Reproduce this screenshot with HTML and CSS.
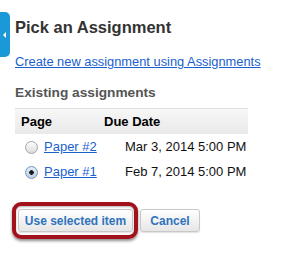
FILE: index.html
```html
<!DOCTYPE html>
<html>
<head>
<meta charset="utf-8">
<link rel="stylesheet" href="styles.css">
</head>
<body>
<div class="page">
  <div class="tab"><span class="tab-arrow"></span></div>
  <div class="content">
    <h1 class="title">Pick an Assignment</h1>
    <a class="create-link" href="#">Create new assignment using Assignments</a>
    <h2 class="subtitle">Existing assignments</h2>
    <div class="table">
      <div class="thead">
        <div class="th th-page">Page</div>
        <div class="th th-date">Due Date</div>
      </div>
      <div class="row">
        <div class="cell cell-page"><input class="radio" type="radio" name="a"><a class="item-link" href="#">Paper #2</a></div>
        <div class="cell cell-date">Mar 3, 2014 5:00 PM</div>
      </div>
      <div class="row">
        <div class="cell cell-page"><input class="radio" type="radio" name="a" checked><a class="item-link" href="#">Paper #1</a></div>
        <div class="cell cell-date">Feb 7, 2014 5:00 PM</div>
      </div>
    </div>
    <div class="actions">
      <button class="btn btn-highlight">Use selected item</button>
      <button class="btn btn-cancel">Cancel</button>
    </div>
  </div>
</div>
</body>
</html>
```
FILE: styles.css
```css
html, body {
  margin: 0;
  padding: 0;
  background: #fff;
}
body {
  font-family: "Liberation Sans", Arial, sans-serif;
  width: 298px;
  height: 253px;
  overflow: hidden;
}
.page {
  display: flex;
}
.tab {
  flex-shrink: 0;
  width: 10px;
  height: 45px;
  margin-top: 12px;
  background: #1a98d8;
  border-radius: 0 5px 5px 0;
  display: flex;
  align-items: center;
  justify-content: center;
}
.tab-arrow {
  width: 0;
  height: 0;
  border-top: 3px solid transparent;
  border-bottom: 3px solid transparent;
  border-right: 3px solid #fff;
  margin-right: 1px;
}
.content {
  padding-left: 5px;
  display: flex;
  flex-direction: column;
  align-items: flex-start;
}
.title {
  margin: 16px 0 0;
  font-size: 16.5px;
  line-height: 22px;
  font-weight: bold;
  color: #333;
}
.create-link {
  margin-top: 16px;
  font-size: 12.85px;
  line-height: 16px;
  color: #1a5fcf;
  text-decoration: underline;
}
.subtitle {
  margin: 14px 0 0;
  font-size: 13.7px;
  line-height: 17px;
  font-weight: bold;
  color: #555;
}
.table {
  margin-top: 7px;
  width: 233px;
  font-size: 13px;
  line-height: 16px;
}
.thead {
  display: grid;
  grid-template-columns: 89px 1fr;
  background: linear-gradient(#f7f7f7, #e9e9e9);
  border-top: 1px solid #dedede;
  padding: 5px 0 4px;
}
.th {
  font-weight: bold;
  color: #000;
}
.th-page {
  padding-left: 6px;
}
.row {
  display: grid;
  grid-template-columns: 110px 1fr;
  padding: 5px 0 4px;
  height: 16px;
}
.cell-page {
  display: flex;
  align-items: center;
  padding-left: 10px;
}
.cell-date {
  color: #111;
}
.radio {
  appearance: none;
  -webkit-appearance: none;
  margin: 0 6px 0 0;
  width: 13px;
  height: 13px;
  border-radius: 50%;
  border: 1px solid #a5a5a5;
  background: linear-gradient(#fdfdfd, #dcdcdc);
  box-sizing: border-box;
  flex-shrink: 0;
}
.radio:checked {
  border-color: #7d95b3;
  background: radial-gradient(circle, #1b1b1b 0 2px, transparent 2.5px), linear-gradient(#e3edf9, #b9cde5);
}
.item-link {
  color: #1a5fcf;
  text-decoration: underline;
}
.actions {
  margin-top: 25px;
  margin-left: 3px;
  display: flex;
  gap: 7px;
}
.btn {
  font-family: "Liberation Sans", Arial, sans-serif;
  font-size: 12px;
  font-weight: bold;
  color: #2f73bd;
  height: 23px;
  padding: 0;
  white-space: nowrap;
  border: 1px solid #c8c8c8;
  border-radius: 3px;
  background: linear-gradient(#ffffff, #e6e6e6);
  box-shadow: 0 1px 1px rgba(0,0,0,0.12);
}
.btn-highlight {
  width: 115px;
  position: relative;
}
.btn-highlight::after {
  content: "";
  position: absolute;
  left: -7px;
  right: -6px;
  top: -8px;
  bottom: -8px;
  border: 4px solid #a1121b;
  border-radius: 9px;
  box-shadow: 0 2px 3px rgba(0,0,0,0.45), inset 0 1px 2px rgba(0,0,0,0.3);
}
.btn-cancel {
  width: 60px;
}
```
